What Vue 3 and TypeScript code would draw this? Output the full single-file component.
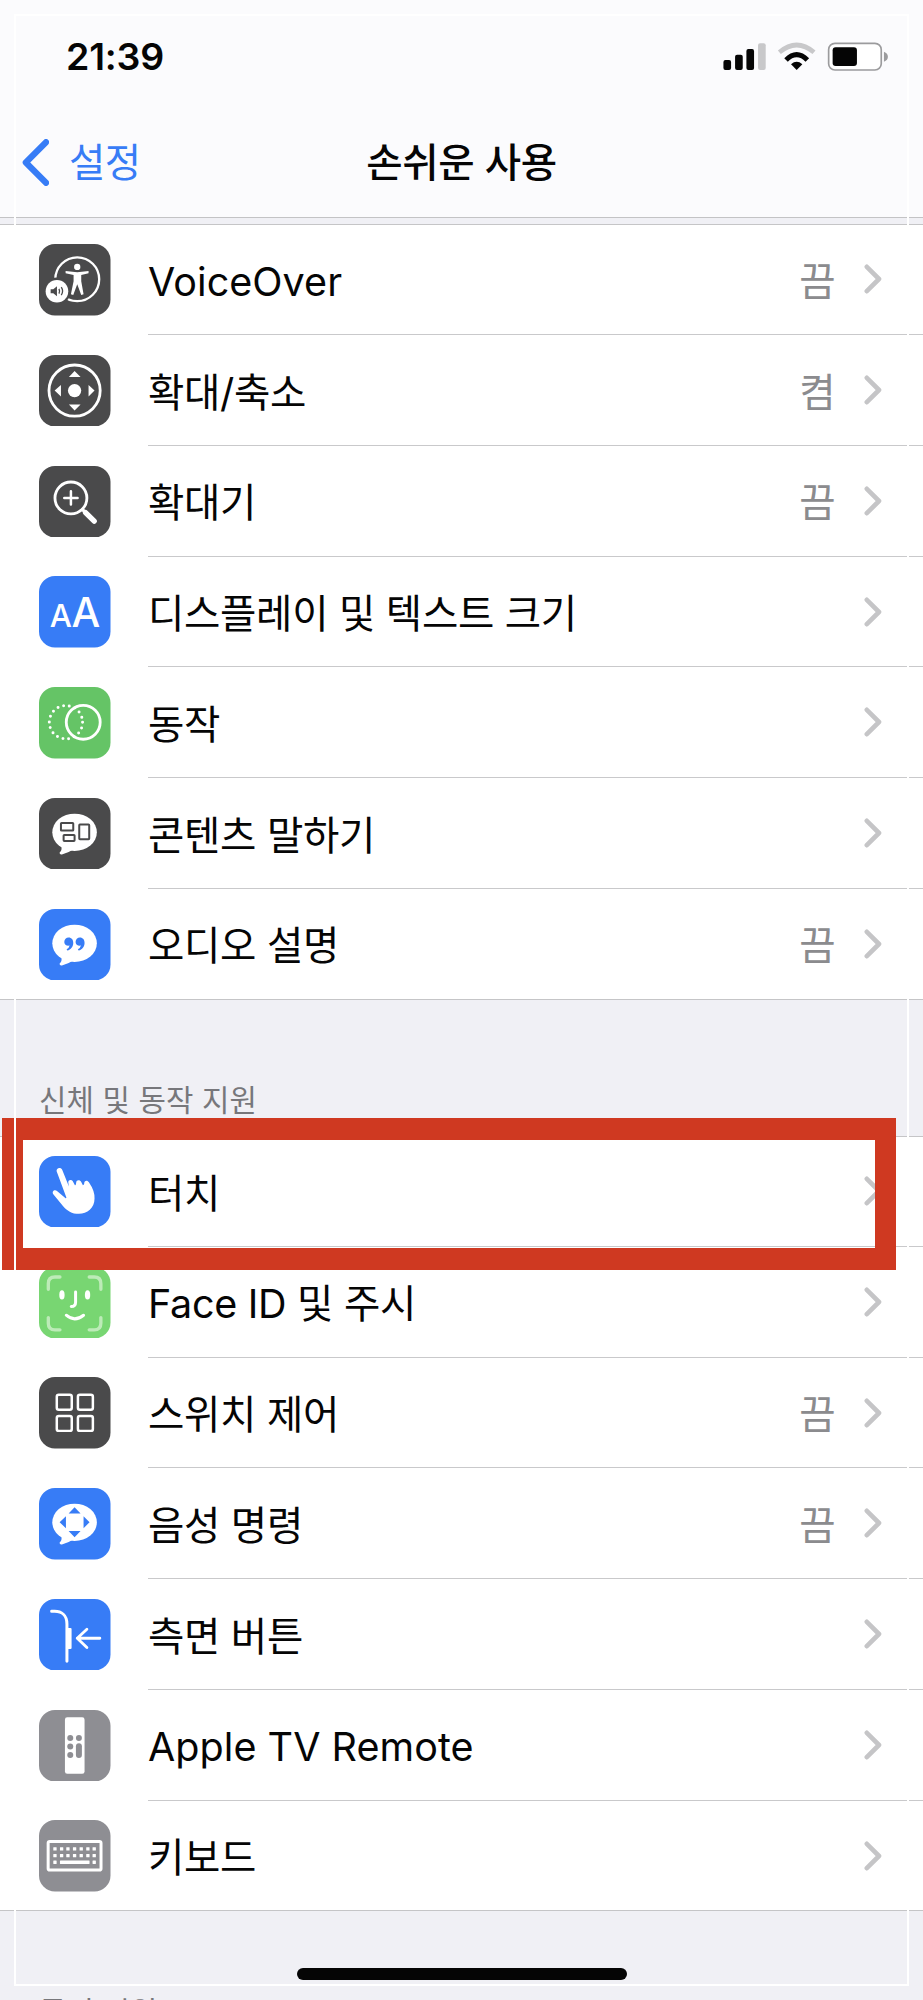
<script setup lang="ts">
type IconName =
  | 'voiceover' | 'zoom' | 'magnifier' | 'display' | 'motion' | 'spoken' | 'audio'
  | 'touch' | 'face' | 'switch' | 'voice' | 'side' | 'remote' | 'keyboard'

interface Row {
  icon: IconName
  label: string
  tone: 'dark' | 'blue' | 'green' | 'lime' | 'gray'
  value?: string
}

interface Section {
  id: string
  title?: string
  rows: Row[]
}

const sections: Section[] = [
  {
    id: 'vision',
    rows: [
      { icon: 'voiceover', label: 'VoiceOver', tone: 'dark', value: '끔' },
      { icon: 'zoom', label: '확대/축소', tone: 'dark', value: '켬' },
      { icon: 'magnifier', label: '확대기', tone: 'dark', value: '끔' },
      { icon: 'display', label: '디스플레이 및 텍스트 크기', tone: 'blue' },
      { icon: 'motion', label: '동작', tone: 'green' },
      { icon: 'spoken', label: '콘텐츠 말하기', tone: 'dark' },
      { icon: 'audio', label: '오디오 설명', tone: 'blue', value: '끔' },
    ],
  },
  {
    id: 'motor',
    title: '신체 및 동작 지원',
    rows: [
      { icon: 'touch', label: '터치', tone: 'blue' },
      { icon: 'face', label: 'Face ID 및 주시', tone: 'lime' },
      { icon: 'switch', label: '스위치 제어', tone: 'dark', value: '끔' },
      { icon: 'voice', label: '음성 명령', tone: 'blue', value: '끔' },
      { icon: 'side', label: '측면 버튼', tone: 'blue' },
      { icon: 'remote', label: 'Apple TV Remote', tone: 'gray' },
      { icon: 'keyboard', label: '키보드', tone: 'gray' },
    ],
  },
]

const keyColumns = [48, 68, 87, 107, 127, 147, 166]
const isLatin = (text: string) => /^[A-Za-z ]+$/.test(text)
</script>

<template>
  <div class="screen">
    <header class="top">
      <div class="status">
        <span class="time">21:39</span>
        <svg class="indicators" viewBox="780 120 510 100">
          <rect x="787" y="180" width="23" height="30" rx="6" fill="#050505" />
          <rect x="822" y="164" width="23" height="46" rx="6" fill="#050505" />
          <rect x="856" y="147" width="23" height="63" rx="6" fill="#050505" />
          <rect x="891" y="130" width="23" height="80" rx="6" fill="#c8c8ca" />
          <path d="M955 157 Q1007 113 1059 157" fill="none" stroke="#c8c8ca" stroke-width="14" />
          <path d="M975 180 Q1007 148 1039 180" fill="none" stroke="#050505" stroke-width="15" />
          <path d="M990 193 Q1007 178 1024 193 L1007 210 Z" fill="#050505" />
          <rect x="1103" y="130" width="158" height="80" rx="19" fill="#fff" stroke="#9b9b9d" stroke-width="5" />
          <rect x="1115" y="142" width="73" height="56" rx="9" fill="#050505" />
          <path d="M1269 155 Q1281 160 1281 170 Q1281 180 1269 185 Z" fill="#9b9b9d" />
        </svg>
      </div>
      <nav class="nav">
        <a class="back">
          <svg class="back-arrow" viewBox="0 0 27 47">
            <path d="M24 3.2 L3.8 23.5 L24 43.8" fill="none" stroke="#377cf6" stroke-width="6.2" stroke-linecap="round" stroke-linejoin="round" />
          </svg>
          <span class="back-text">설정</span>
        </a>
        <h1 class="title">손쉬운 사용</h1>
      </nav>
    </header>

    <main class="content">
      <section v-for="section in sections" :key="section.id" class="section" :class="section.id">
        <h2 v-if="section.title" class="section-title">{{ section.title }}</h2>
        <ul class="rows">
          <li v-for="row in section.rows" :key="row.icon" class="row">
            <svg class="icon" :class="row.tone" viewBox="0 0 215 215">
              <rect class="tile" width="215" height="215" rx="48" />
              <g v-if="row.icon === 'voiceover'">
                <circle class="line" cx="115" cy="106" r="66" stroke-width="7" />
                <circle cx="115" cy="69" r="9.5" />
                <path d="M80 81 L115 85 L149 81 V88 L127 93 V112 L134 151 L127 153 L115 121 L103 153 L96 151 L104 112 V93 L80 88 Z" />
                <circle class="tile" cx="54" cy="142" r="41" />
                <circle cx="54" cy="142" r="34" />
                <path class="tile" d="M35 136 H43 L54 127 V157 L43 148 H35 Z" />
                <path class="cut" d="M60 135 Q64 142 60 149 M67 130 Q75 142 67 154" stroke-width="4" />
              </g>
              <g v-else-if="row.icon === 'zoom'">
                <circle class="line" cx="107" cy="107" r="77" stroke-width="8.5" />
                <circle cx="107" cy="107" r="20" />
                <path d="M107 48 L90 66 H125 Z M107 167 L90 149 H125 Z M47 107 L66 90 V125 Z M167 107 L149 90 V125 Z" />
              </g>
              <g v-else-if="row.icon === 'magnifier'">
                <circle class="line" cx="96" cy="96" r="48" stroke-width="8.5" />
                <path class="line" d="M76 96 H116 M96 76 V116" stroke-width="7.5" />
                <path class="line" d="M131 131 L140 140" stroke-width="10" />
                <path class="line" d="M140 140 L166 166" stroke-width="16" />
              </g>
              <g v-else-if="row.icon === 'display'" class="letters">
                <text x="66" y="153" font-size="94">A</text>
                <text x="141" y="153" font-size="122">A</text>
              </g>
              <g v-else-if="row.icon === 'motion'">
                <circle class="line" cx="81" cy="106" r="50" stroke-width="9" stroke-dasharray="0 17.453" />
                <circle class="line" cx="133" cy="106" r="51" stroke-width="8.5" />
              </g>
              <g v-else-if="row.icon === 'spoken'">
                <ellipse cx="107" cy="103" rx="67" ry="56" />
                <path d="M68 141 Q70 157 62 164 Q61 171 69 170 Q88 165 103 155 Z" />
                <rect class="cut" x="66" y="75" width="37" height="23" rx="2" stroke-width="6" />
                <rect class="cut" x="74" y="111" width="33" height="18" rx="2" stroke-width="6" />
                <rect class="cut" x="121" y="80" width="30" height="44" rx="2" stroke-width="6" />
              </g>
              <g v-else-if="row.icon === 'audio'">
                <ellipse cx="107" cy="103" rx="67" ry="56" />
                <path d="M68 141 Q70 157 62 164 Q61 171 69 170 Q88 165 103 155 Z" />
                <g class="tile">
                  <path d="M89 86 C98 86 103 93 103 102 C103 113 96 122 85 125 L83 121 Q91 117 92 110 C83 112 76 106 76 99 C76 92 82 86 89 86 Z" />
                  <path d="M123 86 C132 86 137 93 137 102 C137 113 130 122 119 125 L117 121 Q125 117 126 110 C117 112 110 106 110 99 C110 92 116 86 123 86 Z" />
                </g>
              </g>
              <g v-else-if="row.icon === 'touch'">
                <path d="M53 46 C51 35 66 32 70 42 L90 92 L88 79 C88 71 99 70 102 77 L108 88 Q110 89 111 85 L112 79 C112 71 124 71 127 78 L132 88 Q135 88 136 83 C135 73 146 71 150 79 Q168 105 167 128 C167 157 145 174 120 174 C99 174 84 164 72 150 L43 115 C37 105 48 99 55 106 L80 127 Q83 128 82 124 Z" />
              </g>
              <g v-else-if="row.icon === 'face'">
                <path class="line pale" d="M28 67 V50 Q28 30 48 30 H63 M151 30 H166 Q186 30 186 50 V67 M186 152 V169 Q186 189 166 189 H151 M63 189 H48 Q28 189 28 169 V152" stroke-width="10" />
                <ellipse cx="69" cy="84" rx="8" ry="14" />
                <ellipse cx="146" cy="84" rx="8" ry="14" />
                <path class="line" d="M110 75 V106 Q110 119 97 119" stroke-width="9" />
                <path class="line" d="M82 145 Q107 167 134 145" stroke-width="9" />
              </g>
              <g v-else-if="row.icon === 'switch'">
                <rect class="line" x="53.5" y="53.5" width="45" height="45" rx="6" stroke-width="7.5" />
                <rect class="line" x="117" y="53.5" width="45" height="45" rx="6" stroke-width="7.5" />
                <rect class="line" x="53.5" y="117" width="45" height="45" rx="6" stroke-width="7.5" />
                <rect class="line" x="117" y="117" width="45" height="45" rx="6" stroke-width="7.5" />
              </g>
              <g v-else-if="row.icon === 'voice'">
                <ellipse cx="107" cy="103" rx="67" ry="56" />
                <path d="M68 141 Q70 157 62 164 Q61 171 69 170 Q88 165 103 155 Z" />
                <path class="tile" d="M107 58 L125 77 H89 Z M107 148 L125 129 H89 Z M62 103 L81 85 V121 Z M152 103 L134 85 V121 Z" />
              </g>
              <g v-else-if="row.icon === 'side'">
                <path class="line" d="M38 37 H47 C67 37 84 48 84 75 V187" stroke-width="9" />
                <rect x="84" y="87" width="14" height="63" rx="3" />
                <path class="line" d="M115 118 H183 M144 91 L115 118 L144 146" stroke-width="8.5" />
              </g>
              <g v-else-if="row.icon === 'remote'">
                <rect x="78" y="22" width="59" height="170" rx="7" />
                <g class="tile">
                  <circle cx="94" cy="84" r="9" />
                  <circle cx="120" cy="84" r="9" />
                  <circle cx="94" cy="110" r="9" />
                  <circle cx="94" cy="135" r="9" />
                  <rect x="111" y="100" width="18" height="44" rx="9" />
                </g>
              </g>
              <g v-else>
                <rect class="line" x="27.5" y="64.5" width="159" height="86" rx="5" stroke-width="9" />
                <template v-for="x in keyColumns" :key="x">
                  <rect :x="x - 5" y="82" width="10" height="10" rx="1" />
                  <rect :x="x - 5" y="102" width="10" height="10" rx="1" />
                </template>
                <rect x="43" y="122" width="10" height="10" rx="1" />
                <rect x="63" y="122" width="89" height="10" rx="1" />
                <rect x="161" y="122" width="10" height="10" rx="1" />
              </g>
            </svg>
            <div class="body">
              <span class="label" :class="{ latin: isLatin(row.label) }">{{ row.label }}</span>
              <span v-if="row.value" class="value">{{ row.value }}</span>
              <svg class="chevron" viewBox="0 0 18 30">
                <path d="M2.8 2.8 L15 15 L2.8 27.2" fill="none" stroke="#c5c5c7" stroke-width="4.6" stroke-linecap="round" stroke-linejoin="round" />
              </svg>
            </div>
          </li>
        </ul>
      </section>
      <h2 class="section-title next">듣기 지원</h2>
    </main>

    <div class="highlight"></div>
    <div class="frame"></div>
    <div class="home-bar"></div>
  </div>
</template>

<style>
body {
  margin: 0;
}
</style>

<style scoped>
.screen {
  position: relative;
  width: 923px;
  height: 2000px;
  overflow: hidden;
  background: #f0f0f5;
  color: #050505;
  font-family: Inter, "Noto Sans CJK KR", sans-serif;
}
.top {
  box-sizing: border-box;
  height: 218px;
  border-bottom: 1px solid #c3c3c5;
  background: #fbfbfd;
}
.status {
  display: flex;
  justify-content: space-between;
  align-items: center;
  height: 113px;
  padding: 0 32px 0 66px;
}
.time {
  font-size: 37.5px;
  font-weight: 600;
  letter-spacing: -0.2px;
}
.indicators {
  width: 170px;
  height: 33.3px;
}
.nav {
  display: grid;
  grid-template-columns: 1fr auto 1fr;
  align-items: center;
  height: 99px;
  padding: 0 22px;
}
.back {
  display: flex;
  align-items: center;
  gap: 20px;
  color: #377cf6;
}
.back-arrow {
  width: 27px;
  height: 47px;
}
.back-text {
  padding-bottom: 7px;
  font-size: 39.5px;
  letter-spacing: -0.5px;
}
.title {
  margin: 0;
  padding-bottom: 7px;
  font-size: 39.5px;
  font-weight: 500;
  letter-spacing: -0.3px;
}
.content {
  padding-top: 6.4px;
}
.rows {
  margin: 0;
  padding: 0;
  list-style: none;
  background: #fff;
  box-shadow: inset 0 1px 0 #c5c5c7, inset 0 -1px 0 #c5c5c7;
}
.row {
  display: flex;
  height: 110.75px;
  padding-left: 39.3px;
  align-items: center;
}
.icon {
  flex: none;
  width: 71.5px;
  height: 71.5px;
  fill: #fff;
}
.dark { color: #4a4a4b; }
.blue { color: #377cf6; }
.green { color: #65c466; }
.lime { color: #78d672; }
.gray { color: #8e8e93; }
.tile {
  fill: currentColor;
}
.line {
  fill: none;
  stroke: #fff;
  stroke-linecap: round;
  stroke-linejoin: round;
}
.cut {
  fill: none;
  stroke: currentColor;
}
.pale {
  stroke: #bdebb8;
}
.letters {
  font-family: Inter, sans-serif;
  font-weight: 500;
  text-anchor: middle;
}
.body {
  display: flex;
  box-sizing: border-box;
  flex: 1;
  align-items: center;
  align-self: stretch;
  margin-left: 37.2px;
  padding-right: 41.5px;
  border-bottom: 1px solid #c9c9cb;
}
.row:last-child .body {
  border-bottom-color: transparent;
}
.label {
  flex: 1;
  padding-bottom: 2px;
  font-size: 39.5px;
  letter-spacing: -0.3px;
  white-space: nowrap;
}
.latin {
  padding: 5px 0 0;
  letter-spacing: 0.05px;
}
.value {
  margin-right: 28px;
  padding-bottom: 2px;
  font-size: 39.5px;
  color: #8b8b8e;
}
.chevron {
  width: 18px;
  height: 30px;
}
.section-title {
  box-sizing: border-box;
  height: 136.5px;
  margin: 0;
  padding: 78.5px 0 0 39px;
  color: #77777b;
  font-size: 29.8px;
  font-weight: 400;
  letter-spacing: 0.1px;
  line-height: 44px;
}
.next {
  height: 88px;
}
.highlight {
  position: absolute;
  box-sizing: border-box;
  left: 1.5px;
  top: 1118.3px;
  width: 894px;
  height: 151.5px;
  border: solid #cf3921;
  border-width: 22px 21.5px;
}
.frame {
  position: absolute;
  box-sizing: border-box;
  left: 14px;
  top: 14px;
  width: 895px;
  height: 1972px;
  border: 2px solid #fff;
}
.home-bar {
  position: absolute;
  left: 297px;
  top: 1968px;
  width: 330px;
  height: 12px;
  border-radius: 6px;
  background: #050505;
}
</style>
